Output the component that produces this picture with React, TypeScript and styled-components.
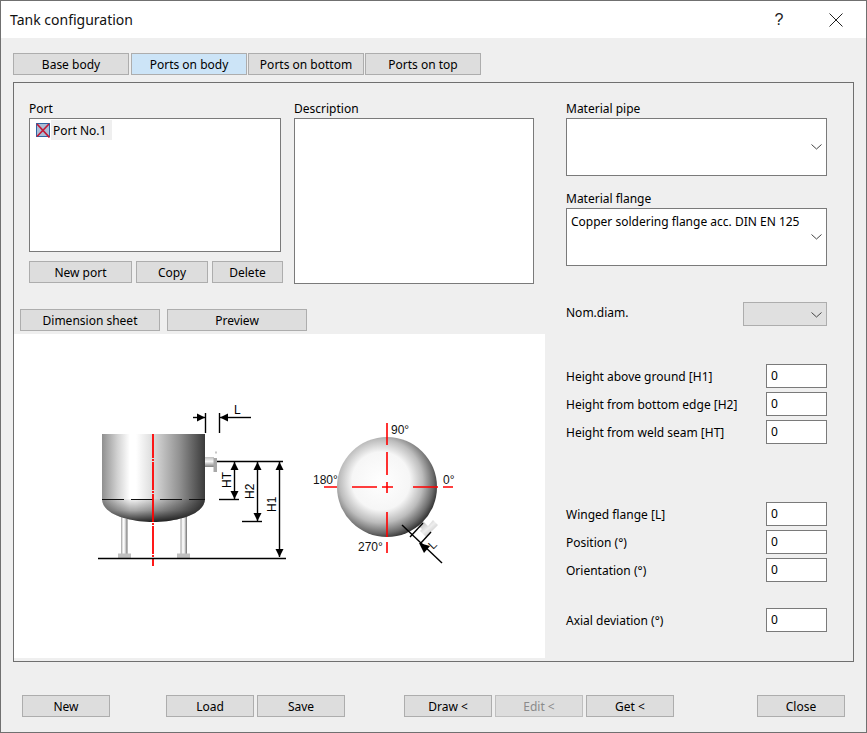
import React from "react";
import styled, { createGlobalStyle } from "styled-components";

const Global = createGlobalStyle`
  html, body { margin: 0; padding: 0; background: #efefef; }
  * { box-sizing: border-box; }
`;
const FONT = `"Noto Sans", "Open Sans", sans-serif`;

const Window = styled.div`
  width: 867px; height: 733px; border: 1px solid #707070; background: #efefef;
  font-family: ${FONT}; font-size: 12px; color: #000; display: flex; flex-direction: column; overflow: hidden;
`;
const TitleBar = styled.div`
  height: 37px; background: #fff; display: flex; align-items: center; padding-left: 9px; flex: none;
`;
const Title = styled.div`font-size: 14px; flex: 1; color: #111;`;
const Help = styled.div`width: 14px; font-size: 16px; margin-right: 43px; text-align: center; color: #222; font-family: "Liberation Sans", sans-serif;`;
const CloseIcon = styled.svg`width: 14px; height: 14px; margin-right: 23px;`;
const Body = styled.div`flex: 1; padding: 15px 13px 0 12px; display: flex; flex-direction: column;`;
const Tabs = styled.div`display: flex; height: 22px; gap: 1px;`;
const Btn = styled.button<{ $w: number; $active?: boolean; $disabled?: boolean; $mr?: number }>`
  width: ${(p) => p.$w}px; height: 22px; padding: 0; margin: 0 ${(p) => p.$mr ?? 0}px 0 0; flex: none;
  border: 1px solid ${(p) => (p.$disabled ? "#bfbfbf" : "#adadad")};
  background: ${(p) => (p.$active ? "#cce4f7" : "#dddddd")};
  color: ${(p) => (p.$disabled ? "#8a8a8a" : "#000")};
  font: 12px ${FONT}; line-height: 19px;
`;
const Panel = styled.div`
  margin-top: 7px; width: 841px; height: 580px; border: 1px solid #6f6f6f; display: flex; flex: none;
`;
const Left = styled.div`width: 531px; flex: none; display: flex; flex-direction: column;`;
const TopRow = styled.div`display: flex; gap: 13px; padding: 18px 0 0 15px; height: 201px;`;
const Column = styled.div<{ $w: number }>`width: ${(p) => p.$w}px; display: flex; flex-direction: column;`;
const Label = styled.div`height: 17px; line-height: 16px; white-space: nowrap;`;
const Box = styled.div<{ $h: number }>`
  height: ${(p) => p.$h}px; background: #fff; border: 1px solid #7a7a7a; position: relative; flex: none;
`;
const ListItem = styled.div`display: flex; align-items: center; height: 20px; margin: 1px 0 0 6px;`;
const ItemCheck = styled.svg`width: 14px; height: 15px; flex: none; margin-right: 1px;`;
const ItemText = styled.span`background: #efefef; height: 20px; line-height: 21px; padding: 0 6px 0 2px;`;
const ListButtons = styled.div`display: flex; gap: 4px; margin-top: 9px;`;
const ViewButtons = styled.div`display: flex; gap: 7px; padding: 25px 0 0 6px;`;
const Drawing = styled.svg`display: block; width: 531px; height: 324px; margin-top: 3px; background: #fff;`;
const Right = styled.div`width: 261px; margin-left: 21px; padding-top: 18px; display: flex; flex-direction: column;`;
const ComboText = styled.div`padding: 5px 4px; line-height: 16px; white-space: nowrap;`;
const Chevron = styled.svg`position: absolute; right: 4px; top: 25px; width: 11px; height: 6px;`;
const FlangeLabel = styled(Label)`margin-top: 15px;`;
const NomRow = styled.div`display: flex; justify-content: space-between; align-items: center; margin-top: 36px; height: 24px;`;
const NomLabel = styled.span`margin-top: -4px;`;
const Select = styled.div`width: 84px; height: 24px; background: #e0e0e0; border: 1px solid #adadad; position: relative;`;
const SelectChevron = styled(Chevron)`top: 9px;`;
const FieldGroup = styled.div<{ $mt: number }>`display: flex; flex-direction: column; gap: 4px; margin-top: ${(p) => p.$mt}px;`;
const FieldRow = styled.div`display: flex; justify-content: space-between; align-items: center; height: 24px;`;
const Input = styled.div`width: 61px; height: 24px; background: #fff; border: 1px solid #7a7a7a; padding: 0 4px; line-height: 21px;`;
const Footer = styled.div`display: flex; margin-top: 33px; padding-left: 9px;`;
const Group = styled.div<{ $ml: number }>`display: flex; gap: 3px; margin-left: ${(p) => p.$ml}px;`;

const chev = <polyline points="0.5,0.5 5.5,5 10.5,0.5" fill="none" stroke="#444" strokeWidth="1" />;

const Arrow = ({ x, y, dir }: { x: number; y: number; dir: "u" | "d" | "l" | "r" }) => {
  const pts = {
    u: `${x},${y} ${x - 4},${y + 8} ${x + 4},${y + 8}`,
    d: `${x},${y} ${x - 4},${y - 8} ${x + 4},${y - 8}`,
    l: `${x},${y} ${x + 8},${y - 4} ${x + 8},${y + 4}`,
    r: `${x},${y} ${x - 8},${y - 4} ${x - 8},${y + 4}`,
  }[dir];
  return <polygon points={pts} fill="#000" />;
};

const DISH = "M102 499 H205 C205 515 175 522 153 522 C131 522 102 515 102 499 Z";

const Diagram = () => (
  <Drawing viewBox="14 334 531 324">
    <defs>
      <linearGradient id="tank" x1="0" x2="1" y1="0" y2="0">
        <stop offset="0" stopColor="#8f8f8f" />
        <stop offset="0.15" stopColor="#d2d2d2" />
        <stop offset="0.27" stopColor="#ffffff" />
        <stop offset="0.33" stopColor="#ffffff" />
        <stop offset="0.5" stopColor="#dadada" />
        <stop offset="0.75" stopColor="#929292" />
        <stop offset="1" stopColor="#3a3a3a" />
      </linearGradient>
      <linearGradient id="dishShade" x1="0" x2="0" y1="0" y2="1">
        <stop offset="0" stopColor="#000" stopOpacity="0.05" />
        <stop offset="0.5" stopColor="#000" stopOpacity="0.35" />
        <stop offset="1" stopColor="#000" stopOpacity="0.85" />
      </linearGradient>
      <linearGradient id="leg" x1="0" x2="1" y1="0" y2="0">
        <stop offset="0" stopColor="#a0a0a0" />
        <stop offset="0.35" stopColor="#ffffff" />
        <stop offset="0.6" stopColor="#e8e8e8" />
        <stop offset="1" stopColor="#707070" />
      </linearGradient>
      <linearGradient id="pipe" x1="0" x2="0" y1="0" y2="1">
        <stop offset="0" stopColor="#c0c0c0" />
        <stop offset="0.45" stopColor="#f6f6f6" />
        <stop offset="1" stopColor="#808080" />
      </linearGradient>
      <radialGradient id="ball" cx="0.44" cy="0.44" r="0.58">
        <stop offset="0" stopColor="#ffffff" />
        <stop offset="0.5" stopColor="#f6f6f6" />
        <stop offset="0.72" stopColor="#bcbcbc" />
        <stop offset="0.9" stopColor="#6c6c6c" />
        <stop offset="1" stopColor="#333333" />
      </radialGradient>
      <linearGradient id="stub" x1="0" x2="1" y1="0" y2="1">
        <stop offset="0" stopColor="#a4a4a4" />
        <stop offset="0.5" stopColor="#eeeeee" />
        <stop offset="1" stopColor="#acacac" />
      </linearGradient>
    </defs>

    <rect x="121" y="512" width="6.5" height="42" fill="url(#leg)" />
    <rect x="180.5" y="512" width="6.5" height="42" fill="url(#leg)" />
    <rect x="118" y="553.5" width="13" height="4.5" fill="#c0c0c0" />
    <rect x="177" y="553.5" width="13" height="4.5" fill="#c0c0c0" />
    <path d={DISH} fill="url(#tank)" />
    <path d={DISH} fill="url(#dishShade)" />
    <rect x="102" y="434" width="103" height="65" fill="url(#tank)" />
    <rect x="205" y="457" width="9" height="10" fill="url(#pipe)" />
    <rect x="213.5" y="458" width="3.5" height="14" fill="#a8a8a8" />
    <rect x="215" y="451.5" width="2" height="2" fill="#c8c8c8" />
    <line x1="102" y1="499.5" x2="205" y2="499.5" stroke="#111" strokeWidth="1.2" strokeDasharray="22 7" />
    <line x1="153" y1="434" x2="153" y2="566" stroke="#ff0000" strokeWidth="1.8" strokeDasharray="28 1 2 1" strokeDashoffset="4" />
    <line x1="98" y1="558.5" x2="286" y2="558.5" stroke="#000" strokeWidth="1.4" />

    <g stroke="#000" strokeWidth="1.4" fill="none">
      <line x1="205.5" y1="413" x2="205.5" y2="433" />
      <line x1="219.5" y1="413" x2="219.5" y2="433" />
      <line x1="193" y1="417.5" x2="205" y2="417.5" />
      <line x1="220" y1="417.5" x2="251" y2="417.5" />
      <line x1="217" y1="461.5" x2="283" y2="461.5" />
      <line x1="219" y1="499.5" x2="239" y2="499.5" />
      <line x1="242" y1="521.5" x2="262" y2="521.5" />
      <line x1="234.5" y1="462" x2="234.5" y2="499" />
      <line x1="257.5" y1="462" x2="257.5" y2="521" />
      <line x1="279.5" y1="462" x2="279.5" y2="557" />
    </g>
    <Arrow x={205} y={417.5} dir="r" />
    <Arrow x={220} y={417.5} dir="l" />
    <Arrow x={234.5} y={462} dir="u" />
    <Arrow x={234.5} y={499} dir="d" />
    <Arrow x={257.5} y={462} dir="u" />
    <Arrow x={257.5} y={521} dir="d" />
    <Arrow x={279.5} y={462} dir="u" />
    <Arrow x={279.5} y={557} dir="d" />
    <g fontFamily="'Liberation Sans', sans-serif" fontSize="12" fill="#000">
      <text x="234" y="414">L</text>
      <text transform="translate(231 488) rotate(-90)">HT</text>
      <text transform="translate(254 499) rotate(-90)">H2</text>
      <text transform="translate(276 512) rotate(-90)">H1</text>
    </g>

    <polygon points="418,526 423,521 428,526 433,520 438,525 426,537 420,531 422,529" fill="url(#stub)" />
    <circle cx="387" cy="487" r="50" fill="url(#ball)" />
    <line x1="387" y1="423" x2="387" y2="553" stroke="#ff0000" strokeWidth="1.6" strokeDasharray="22 7 23 7 11 19 25 5 11" />
    <line x1="324" y1="487" x2="453" y2="487" stroke="#ff0000" strokeWidth="1.4" strokeDasharray="13 15 25 5 11 20 25 5 10" />
    <g stroke="#000" strokeWidth="1.4" fill="none">
      <line x1="402" y1="525" x2="442" y2="563" />
      <line x1="410" y1="537" x2="423" y2="523" />
      <line x1="420" y1="544" x2="431" y2="532" />
    </g>
    <polygon points="419,543 430,546 424,553" fill="#000" />
    <g fontFamily="'Liberation Sans', sans-serif" fontSize="12" fill="#111">
      <text x="391" y="434">90°</text>
      <text x="313" y="484">180°</text>
      <text x="443" y="484">0°</text>
      <text x="358" y="551">270°</text>
      <text transform="translate(433 550) rotate(-45)">L</text>
    </g>
  </Drawing>
);

const fields1 = ["Height above ground [H1]", "Height from bottom edge [H2]", "Height from weld seam [HT]"];
const fields2 = ["Winged flange [L]", "Position (°)", "Orientation (°)"];

export default function App() {
  return (
    <Window>
      <Global />
      <TitleBar>
        <Title>Tank configuration</Title>
        <Help>?</Help>
        <CloseIcon viewBox="0 0 14 14">
          <path d="M0.5 0.5 L13.5 13.5 M13.5 0.5 L0.5 13.5" stroke="#222" strokeWidth="1" fill="none" />
        </CloseIcon>
      </TitleBar>
      <Body>
        <Tabs>
          <Btn $w={116} $mr={1}>Base body</Btn>
          <Btn $w={116} $active>Ports on body</Btn>
          <Btn $w={116}>Ports on bottom</Btn>
          <Btn $w={116}>Ports on top</Btn>
        </Tabs>
        <Panel>
          <Left>
            <TopRow>
              <Column $w={252}>
                <Label>Port</Label>
                <Box $h={134}>
                  <ListItem>
                    <ItemCheck viewBox="0 0 14 15">
                      <rect x="0.5" y="0.5" width="13" height="13" fill="#a9bdd6" stroke="#2f64a4" />
                      <path d="M1 1 L13.5 14.5 M13 1 L1 13.5" stroke="#c21a38" strokeWidth="1.7" />
                    </ItemCheck>
                    <ItemText>Port No.1</ItemText>
                  </ListItem>
                </Box>
                <ListButtons>
                  <Btn $w={103}>New port</Btn>
                  <Btn $w={72}>Copy</Btn>
                  <Btn $w={71}>Delete</Btn>
                </ListButtons>
              </Column>
              <Column $w={240}>
                <Label>Description</Label>
                <Box $h={166} />
              </Column>
            </TopRow>
            <ViewButtons>
              <Btn $w={140}>Dimension sheet</Btn>
              <Btn $w={140}>Preview</Btn>
            </ViewButtons>
            <Diagram />
          </Left>
          <Right>
            <Label>Material pipe</Label>
            <Box $h={58}>
              <Chevron viewBox="0 0 11 6">{chev}</Chevron>
            </Box>
            <FlangeLabel>Material flange</FlangeLabel>
            <Box $h={58}>
              <ComboText>Copper soldering flange acc. DIN EN 125</ComboText>
              <Chevron viewBox="0 0 11 6">{chev}</Chevron>
            </Box>
            <NomRow>
              <NomLabel>Nom.diam.</NomLabel>
              <Select>
                <SelectChevron viewBox="0 0 11 6">{chev}</SelectChevron>
              </Select>
            </NomRow>
            <FieldGroup $mt={38}>
              {fields1.map((f) => (
                <FieldRow key={f}><span>{f}</span><Input>0</Input></FieldRow>
              ))}
            </FieldGroup>
            <FieldGroup $mt={58}>
              {fields2.map((f) => (
                <FieldRow key={f}><span>{f}</span><Input>0</Input></FieldRow>
              ))}
            </FieldGroup>
            <FieldGroup $mt={26}>
              <FieldRow><span>Axial deviation (°)</span><Input>0</Input></FieldRow>
            </FieldGroup>
          </Right>
        </Panel>
        <Footer>
          <Group $ml={0}><Btn $w={88}>New</Btn></Group>
          <Group $ml={56}><Btn $w={88}>Load</Btn><Btn $w={88}>Save</Btn></Group>
          <Group $ml={59}>
            <Btn $w={88}>Draw &lt;</Btn>
            <Btn $w={88} $disabled>Edit &lt;</Btn>
            <Btn $w={88}>Get &lt;</Btn>
          </Group>
          <Group $ml={83}><Btn $w={88}>Close</Btn></Group>
        </Footer>
      </Body>
    </Window>
  );
}
